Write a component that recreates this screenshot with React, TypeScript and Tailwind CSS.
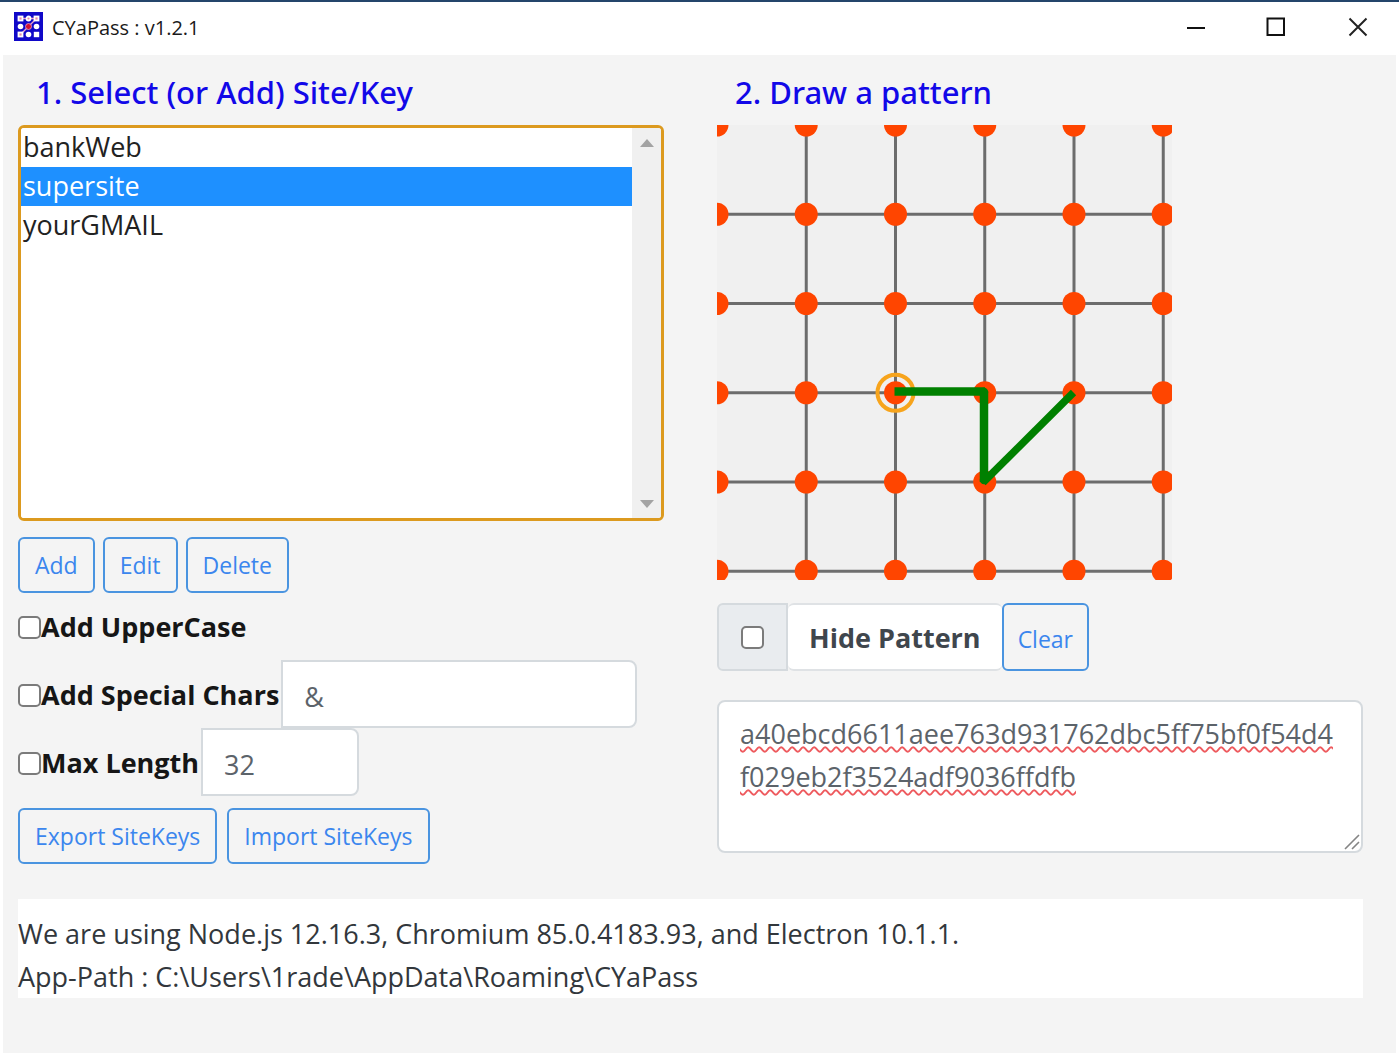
import { useState } from 'react';

const CELL = 89.25;
const STEPS = [0, 1, 2, 3, 4, 5];
const SITES = ['bankWeb', 'supersite', 'yourGMAIL'];

const outlineButton =
  'h-14 rounded-md border-2 border-[#4a94e0] px-[15px] text-[23px] leading-8 text-[#3b86ee] hover:bg-[#e6f0fc]';
const tick =
  'size-[23px] shrink-0 appearance-none rounded-[5px] border-2 border-[#7b7b7b] bg-white checked:bg-[#1e90ff]';
const optionLabel = 'flex shrink-0 items-center pt-0.5 pr-0.5 font-bold text-[#161616]';
const field = 'h-[68px] border-2 border-[#d5dade] bg-white px-[21px] pt-1 text-[27px] text-[#5c636a] outline-none';
const heading =
  "flex h-[70px] items-center pt-1.5 pb-px pl-[18px] font-['Noto_Sans','Open_Sans',sans-serif] text-[31px] font-medium text-[#1208e8]";

function AppIcon() {
  return (
    <svg className="size-[29px]" viewBox="0 0 29 29" aria-hidden="true">
      <rect width="29" height="29" fill="#1008c8" />
      <path d="M6.5 6.5H22.5L6.5 22.5" fill="none" stroke="#e9a3c4" strokeWidth="1.4" />
      <g fill="#e88aa8" stroke="#fff" strokeWidth="1.8">
        <rect x="4.5" y="4.5" width="4" height="4" />
        <circle cx="14.5" cy="6.5" r="2" />
        <rect x="20.5" y="4.5" width="4" height="4" />
        <rect x="4.5" y="20.5" width="4" height="4" />
      </g>
      <circle cx="14.5" cy="14.5" r="3" fill="#d01030" stroke="#e9a3c4" strokeWidth="0.8" />
      <g fill="#fff">
        <circle cx="6.5" cy="14.5" r="2.8" />
        <circle cx="22.5" cy="14.5" r="2.8" />
        <circle cx="14.5" cy="22.5" r="2.8" />
        <rect x="19.8" y="19.8" width="5.4" height="5.4" />
      </g>
    </svg>
  );
}

function TitleBar() {
  return (
    <header className="flex h-[55px] items-center border-t-2 border-[#24456b] bg-white pb-1 pl-3.5">
      <AppIcon />
      <h1 className="ml-[9px] grow pt-0.5 text-[20px] text-[#1a1a1a]">CYaPass : v1.2.1</h1>
      <button aria-label="Minimize" className="grid h-full w-20 place-items-center">
        <svg className="size-5" viewBox="0 0 20 20" fill="none" stroke="#111" strokeWidth="2">
          <path d="M1 11H19" />
        </svg>
      </button>
      <button aria-label="Maximize" className="grid h-full w-20 place-items-center">
        <svg className="size-5" viewBox="0 0 20 20" fill="none" stroke="#111" strokeWidth="2">
          <rect x="1.5" y="1.5" width="16.5" height="16.5" />
        </svg>
      </button>
      <button aria-label="Close" className="grid h-full w-[83px] place-items-center">
        <svg className="size-5" viewBox="0 0 20 20" fill="none" stroke="#222" strokeWidth="2">
          <path d="M1.5 1.5L18.5 18.5M18.5 1.5L1.5 18.5" />
        </svg>
      </button>
    </header>
  );
}

function PatternGrid({ hidden }: { hidden: boolean }) {
  return (
    <svg className="size-[455px] bg-[#f0f0f0]" viewBox="0 0 455 455" role="img" aria-label="Pattern grid">
      <g stroke="#6c6c6c" strokeWidth="3">
        {STEPS.slice(1).map((i) => (
          <g key={i}>
            <line x1={i * CELL} y1="0" x2={i * CELL} y2={5 * CELL} />
            <line x1="0" y1={i * CELL} x2={5 * CELL} y2={i * CELL} />
          </g>
        ))}
      </g>
      <g fill="#ff4500">
        {STEPS.map((row) => STEPS.map((col) => <circle key={`${row}-${col}`} cx={col * CELL} cy={row * CELL} r="11.5" />))}
      </g>
      {!hidden && (
        <g fill="none">
          <circle cx={2 * CELL} cy={3 * CELL} r="18" stroke="#f7a41c" strokeWidth="4" />
          <g stroke="#008000" strokeWidth="8.5">
            <path d="M177.5 266.5H268" />
            <path d="M267 266.5V357" />
          </g>
          <path d="M266 357.5L356.5 267.5" stroke="#008000" strokeWidth="7.5" />
          <circle cx="267" cy="267" r="4.25" fill="#008000" />
          <circle cx="267" cy="355" r="4.25" fill="#008000" />
        </g>
      )}
    </svg>
  );
}

function SiteList() {
  const [site, setSite] = useState('supersite');
  return (
    <div className="flex h-[396px] overflow-hidden rounded-md border-[3px] border-[#dc9a1f] bg-white">
      <select
        aria-labelledby="site-heading"
        size={10}
        value={site}
        onChange={(e) => setSite(e.target.value)}
        className="h-full grow appearance-none overflow-hidden bg-white text-[27px] text-[#222] outline-none"
      >
        {SITES.map((name) => (
          <option
            key={name}
            value={name}
            className="h-[39px] p-0 pl-0.5 leading-[39px] checked:bg-[linear-gradient(#1e90ff,#1e90ff)] checked:text-white"
          >
            {name}
          </option>
        ))}
      </select>
      <div className="flex w-[29px] shrink-0 flex-col items-center justify-between bg-[#f0f0f0] pt-[11px] pb-2.5 text-[#a3a3a3]">
        <svg className="h-2 w-3.5" viewBox="0 0 14 8" fill="currentColor">
          <path d="M0 8L7 0L14 8Z" />
        </svg>
        <svg className="h-2 w-3.5" viewBox="0 0 14 8" fill="currentColor">
          <path d="M0 0L7 8L14 0Z" />
        </svg>
      </div>
    </div>
  );
}

export default function App() {
  const [hidden, setHidden] = useState(false);
  return (
    <div className="flex min-h-screen flex-col bg-white font-['Open_Sans','Noto_Sans',sans-serif] text-[27px] text-[#212529]">
      <TitleBar />
      <main className="mx-[3px] mb-[3px] grow bg-[#f4f4f4] pr-[33px] pl-[15px]">
        <div className="grid grid-cols-2 gap-x-[53px]">
          <section>
            <h2 id="site-heading" className={heading}>
              1. Select (or Add) Site/Key
            </h2>
            <SiteList />
            <div className="mt-4 flex gap-2">
              <button className={outlineButton}>Add</button>
              <button className={outlineButton}>Edit</button>
              <button className={outlineButton}>Delete</button>
            </div>
            <div className="flex h-[67px] items-center">
              <label className={optionLabel}>
                <input type="checkbox" className={tick} />
                Add UpperCase
              </label>
            </div>
            <div className="flex items-center">
              <label className={optionLabel}>
                <input type="checkbox" className={tick} />
                Add Special Chars
              </label>
              <input aria-label="Special characters" defaultValue="&" className={`${field} w-[356px] min-w-0 rounded-r-lg`} />
            </div>
            <div className="flex items-center">
              <label className={optionLabel}>
                <input type="checkbox" className={tick} />
                Max Length
              </label>
              <input aria-label="Maximum length" defaultValue="32" className={`${field} w-[158px] rounded-r-lg`} />
            </div>
            <div className="mt-3 flex gap-2.5">
              <button className={outlineButton}>Export SiteKeys</button>
              <button className={outlineButton}>Import SiteKeys</button>
            </div>
          </section>
          <section>
            <h2 className={heading}>2. Draw a pattern</h2>
            <PatternGrid hidden={hidden} />
            <div className="mt-[23px] flex h-[68px]">
              <div className="grid w-[71px] place-items-center rounded-l-md border-2 border-[#d5dade] bg-[#e9ecef]">
                <input
                  id="hide-pattern"
                  type="checkbox"
                  checked={hidden}
                  onChange={(e) => setHidden(e.target.checked)}
                  className={tick}
                />
              </div>
              <label
                htmlFor="hide-pattern"
                className="grid place-items-center rounded-md border-y-2 border-[#dfe2e5] bg-white px-[21px] pt-0.5 font-bold text-[#3f464d]"
              >
                Hide Pattern
              </label>
              <button className="rounded-md border-2 border-[#4a94e0] px-3.5 pt-1 text-[23px] text-[#3b86ee] hover:bg-[#e6f0fc]">
                Clear
              </button>
            </div>
            <div className="relative mt-[29px]">
              <textarea
                aria-label="Generated password"
                spellCheck={false}
                defaultValue="a40ebcd6611aee763d931762dbc5ff75bf0f54d4f029eb2f3524adf9036ffdfb"
                className="block h-[153px] w-full resize-none overflow-hidden rounded-lg border-2 border-[#d5dade] bg-white px-[21px] py-2.5 leading-[43px] break-all text-[#5c636a] underline decoration-[#ee5a5e] decoration-wavy decoration-2 underline-offset-2 [text-decoration-skip-ink:none] outline-none"
              />
              <svg
                className="pointer-events-none absolute right-[3px] bottom-[3px] size-4"
                viewBox="0 0 16 16"
                stroke="#858585"
                strokeWidth="1.6"
                aria-hidden="true"
              >
                <path d="M1 15L15 1M8 15L15 8" />
              </svg>
            </div>
          </section>
        </div>
        <footer className="mt-[35px] bg-white pt-[13px] text-[27px] leading-[43px] text-[#32373c]">
          <p>We are using Node.js 12.16.3, Chromium 85.0.4183.93, and Electron 10.1.1.</p>
          <p>App-Path : C:\Users\1rade\AppData\Roaming\CYaPass</p>
        </footer>
      </main>
    </div>
  );
}
